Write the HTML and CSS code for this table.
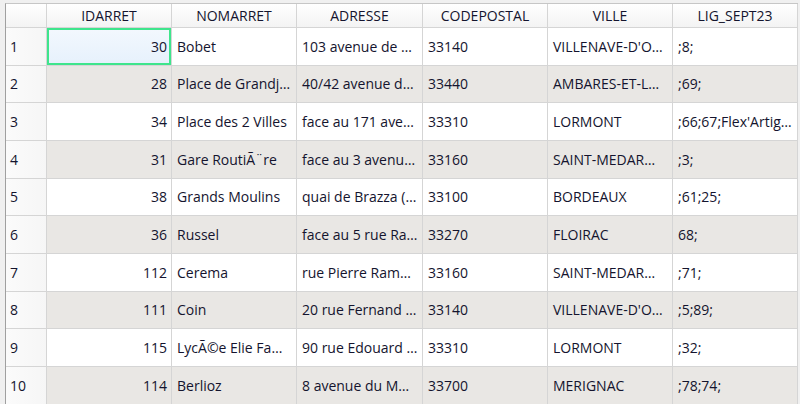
FILE: index.html
```html
<!DOCTYPE html>
<html>
<head>
<meta charset="utf-8">
<link rel="stylesheet" href="styles.css">
</head>
<body>
<div class="frame">
  <div class="grid">
    <div class="hd corner"></div>
    <div class="hd">IDARRET</div>
    <div class="hd">NOMARRET</div>
    <div class="hd">ADRESSE</div>
    <div class="hd">CODEPOSTAL</div>
    <div class="hd">VILLE</div>
    <div class="hd">LIG_SEPT23</div>

    <div class="rh">1</div>
    <div class="c num sel">30</div>
    <div class="c">Bobet</div>
    <div class="c">103 avenue de …</div>
    <div class="c">33140</div>
    <div class="c">VILLENAVE-D'O…</div>
    <div class="c">;8;</div>

    <div class="rh">2</div>
    <div class="c alt num">28</div>
    <div class="c alt">Place de Grandj…</div>
    <div class="c alt">40/42 avenue d…</div>
    <div class="c alt">33440</div>
    <div class="c alt">AMBARES-ET-L…</div>
    <div class="c alt">;69;</div>

    <div class="rh">3</div>
    <div class="c num">34</div>
    <div class="c">Place des 2 Villes</div>
    <div class="c">face au 171 ave…</div>
    <div class="c">33310</div>
    <div class="c">LORMONT</div>
    <div class="c">;66;67;Flex'Artig…</div>

    <div class="rh">4</div>
    <div class="c alt num">31</div>
    <div class="c alt">Gare RoutiÃ¨re</div>
    <div class="c alt">face au 3 avenu…</div>
    <div class="c alt">33160</div>
    <div class="c alt">SAINT-MEDAR…</div>
    <div class="c alt">;3;</div>

    <div class="rh">5</div>
    <div class="c num">38</div>
    <div class="c">Grands Moulins</div>
    <div class="c">quai de Brazza (…</div>
    <div class="c">33100</div>
    <div class="c">BORDEAUX</div>
    <div class="c">;61;25;</div>

    <div class="rh">6</div>
    <div class="c alt num">36</div>
    <div class="c alt">Russel</div>
    <div class="c alt">face au 5 rue Ra…</div>
    <div class="c alt">33270</div>
    <div class="c alt">FLOIRAC</div>
    <div class="c alt">68;</div>

    <div class="rh">7</div>
    <div class="c num">112</div>
    <div class="c">Cerema</div>
    <div class="c">rue Pierre Ram…</div>
    <div class="c">33160</div>
    <div class="c">SAINT-MEDAR…</div>
    <div class="c">;71;</div>

    <div class="rh">8</div>
    <div class="c alt num">111</div>
    <div class="c alt">Coin</div>
    <div class="c alt">20 rue Fernand …</div>
    <div class="c alt">33140</div>
    <div class="c alt">VILLENAVE-D'O…</div>
    <div class="c alt">;5;89;</div>

    <div class="rh">9</div>
    <div class="c num">115</div>
    <div class="c">LycÃ©e Elie Fa…</div>
    <div class="c">90 rue Edouard …</div>
    <div class="c">33310</div>
    <div class="c">LORMONT</div>
    <div class="c">;32;</div>

    <div class="rh">10</div>
    <div class="c alt num">114</div>
    <div class="c alt">Berlioz</div>
    <div class="c alt">8 avenue du M…</div>
    <div class="c alt">33700</div>
    <div class="c alt">MERIGNAC</div>
    <div class="c alt">;78;74;</div>
  </div>
</div>
</body>
</html>
```
FILE: styles.css
```css
html, body {
  margin: 0;
  padding: 0;
  background: #f0f0f0;
  width: 800px;
  height: 404px;
  overflow: hidden;
}
.frame {
  padding: 3px 0 0 5px;
}
.grid {
  display: grid;
  grid-template-columns: 40px 124px 124px 125px 124px 124px 124px;
  grid-template-rows: 23px repeat(10, 36.67px);
  gap: 1px;
  padding: 0 1px 1px 0;
  width: max-content;
  background: #d5d5d5;
  border-left: 1px solid #a0a0a0;
  border-top: 1px solid #c6c6c6;
  font-family: "Open Sans", "Noto Sans", sans-serif;
  font-size: 14px;
  color: #14142e;
}
.hd {
  background: linear-gradient(#ffffff, #f3f3f3);
  display: flex;
  align-items: center;
  justify-content: center;
  white-space: nowrap;
}
.rh {
  background: linear-gradient(90deg, #fbfbfb, #f6f6f6);
  display: flex;
  align-items: center;
  padding-left: 4px;
}
.c {
  background: #ffffff;
  display: flex;
  align-items: center;
  padding: 0 4px 0 5px;
  white-space: nowrap;
  overflow: hidden;
}
.c.alt {
  background: #e9e7e4;
}
.c.num {
  justify-content: flex-end;
}
.c.sel {
  background: linear-gradient(#f3f8fe, #e6f1fc);
  box-shadow: inset 0 0 0 2px #3ee58c;
}
```
